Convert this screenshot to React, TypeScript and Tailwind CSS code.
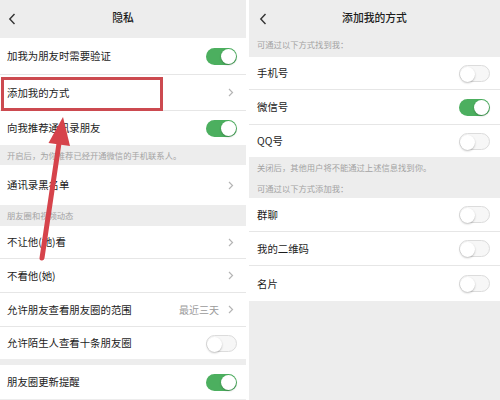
import React from "react";

const font = { fontFamily: '"Noto Sans CJK SC", "Noto Sans", sans-serif' };

function Toggle({ on }: { on?: boolean }) {
  return (
    <div
      className={`relative h-[17px] w-[31px] rounded-full ${
        on ? "bg-[#4caf5f]" : "border border-[#dcdcdc] bg-[#f7f7f7]"
      }`}
    >
      <div
        className={`absolute top-[1px] h-[15px] w-[15px] rounded-full bg-white shadow-[0_1px_2px_rgba(0,0,0,0.25)] ${
          on ? "right-[1px]" : "left-0 top-0"
        }`}
      />
    </div>
  );
}

function Chevron() {
  return (
    <svg width="6" height="9" viewBox="0 0 6 9" className="text-[#b5b5b5]">
      <path d="M1 1l3.5 3.5L1 8" fill="none" stroke="currentColor" strokeWidth="1.2" />
    </svg>
  );
}

function Back() {
  return (
    <svg width="8" height="12" viewBox="0 0 8 12" className="text-[#333]">
      <path d="M6.5 1L1.8 6l4.7 5" fill="none" stroke="currentColor" strokeWidth="1.4" />
    </svg>
  );
}

function Row({
  label,
  h,
  children,
  line = true,
  pl = "pl-[7px]",
  pr = "pr-[10px]",
}: {
  label: string;
  h: string;
  children?: React.ReactNode;
  line?: boolean;
  pl?: string;
  pr?: string;
}) {
  return (
    <div className={`flex ${h} items-center justify-between bg-white ${pl} ${pr} ${line ? "border-b border-[#e6e6e6]" : ""}`}>
      <span className="text-[10.4px] text-[#1c1c1c]">{label}</span>
      {children}
    </div>
  );
}

function Hint({ text, h, pl = "pl-[7px]" }: { text: string; h: string; pl?: string }) {
  return (
    <div className={`flex ${h} items-center ${pl} text-[8.3px] text-[#a3a3a3]`}>{text}</div>
  );
}

function Header({ title, pl }: { title: string; pl: string }) {
  return (
    <div className={`relative flex h-[38px] items-center ${pl}`}>
      <Back />
      <div className="absolute inset-x-0 top-0 flex h-[34px] items-center justify-center text-[10.8px] font-medium text-[#1c1c1c]">
        {title}
      </div>
    </div>
  );
}

function PrivacyPanel() {
  return (
    <div className="relative flex h-[400px] w-[246px] flex-col bg-[#ededed]">
      <Header title="隐私" pl="pl-[8px]" />
      <Row label="加我为朋友时需要验证" h="h-[37px]" pr="pr-[9px]">
        <Toggle on />
      </Row>
      <Row label="添加我的方式" h="h-[36px]" pr="pr-[12px]">
        <Chevron />
      </Row>
      <Row label="向我推荐通讯录朋友" h="h-[34px]" line={false} pr="pr-[9px]">
        <Toggle on />
      </Row>
      <Hint text="开启后，为你推荐已经开通微信的手机联系人。" h="h-[20px]" />
      <Row label="通讯录黑名单" h="h-[40px]" line={false} pr="pr-[12px]">
        <Chevron />
      </Row>
      <Hint text="朋友圈和视频动态" h="h-[21px]" />
      <Row label="不让他(她)看" h="h-[33px]" pr="pr-[12px]">
        <Chevron />
      </Row>
      <Row label="不看他(她)" h="h-[34px]" pr="pr-[12px]">
        <Chevron />
      </Row>
      <Row label="允许朋友查看朋友圈的范围" h="h-[34px]" pr="pr-[12px]">
        <div className="flex items-center gap-[9px]">
          <span className="text-[10px] text-[#9a9a9a]">最近三天</span>
          <Chevron />
        </div>
      </Row>
      <Row label="允许陌生人查看十条朋友圈" h="h-[32px]" line={false} pr="pr-[9px]">
        <Toggle />
      </Row>
      <div className="h-[6px]" />
      <Row label="朋友圈更新提醒" h="h-[34px]" line={false} pr="pr-[9px]">
        <Toggle on />
      </Row>

      <div className="pointer-events-none absolute left-[1px] top-[77px] h-[34px] w-[162px] border-[3px] border-[#cc4a50]" />
      <svg className="pointer-events-none absolute left-0 top-0" width="246" height="400" viewBox="0 0 246 400">
        <line x1="42" y1="258" x2="59.5" y2="140" stroke="#d6434b" strokeWidth="5" strokeLinecap="round" />
        <polygon points="63,117 70,146 48.5,143" fill="#d6434b" />
      </svg>
    </div>
  );
}

function AddMePanel() {
  return (
    <div className="flex h-[400px] flex-1 flex-col bg-[#ededed]">
      <Header title="添加我的方式" pl="pl-[10px]" />
      <div className="flex h-[19px] items-start pl-[8px] text-[8.3px] text-[#a3a3a3]">可通过以下方式找到我：</div>
      <Row label="手机号" h="h-[33px]" pl="pl-[8px]">
        <Toggle />
      </Row>
      <Row label="微信号" h="h-[35px]" pl="pl-[8px]">
        <Toggle on />
      </Row>
      <Row label="QQ号" h="h-[32px]" line={false} pl="pl-[8px]">
        <Toggle />
      </Row>
      <Hint text="关闭后，其他用户将不能通过上述信息找到你。" h="h-[21px]" pl="pl-[8px]" />
      <Hint text="可通过以下方式添加我：" h="h-[20px]" pl="pl-[8px]" />
      <Row label="群聊" h="h-[34px]" pl="pl-[8px]">
        <Toggle />
      </Row>
      <Row label="我的二维码" h="h-[34px]" pl="pl-[8px]">
        <Toggle />
      </Row>
      <Row label="名片" h="h-[35px]" line={false} pl="pl-[8px]">
        <Toggle />
      </Row>
    </div>
  );
}

export default function App() {
  return (
    <div className="flex h-[400px] w-[500px] gap-[3px] overflow-hidden bg-white" style={font}>
      <PrivacyPanel />
      <AddMePanel />
    </div>
  );
}
